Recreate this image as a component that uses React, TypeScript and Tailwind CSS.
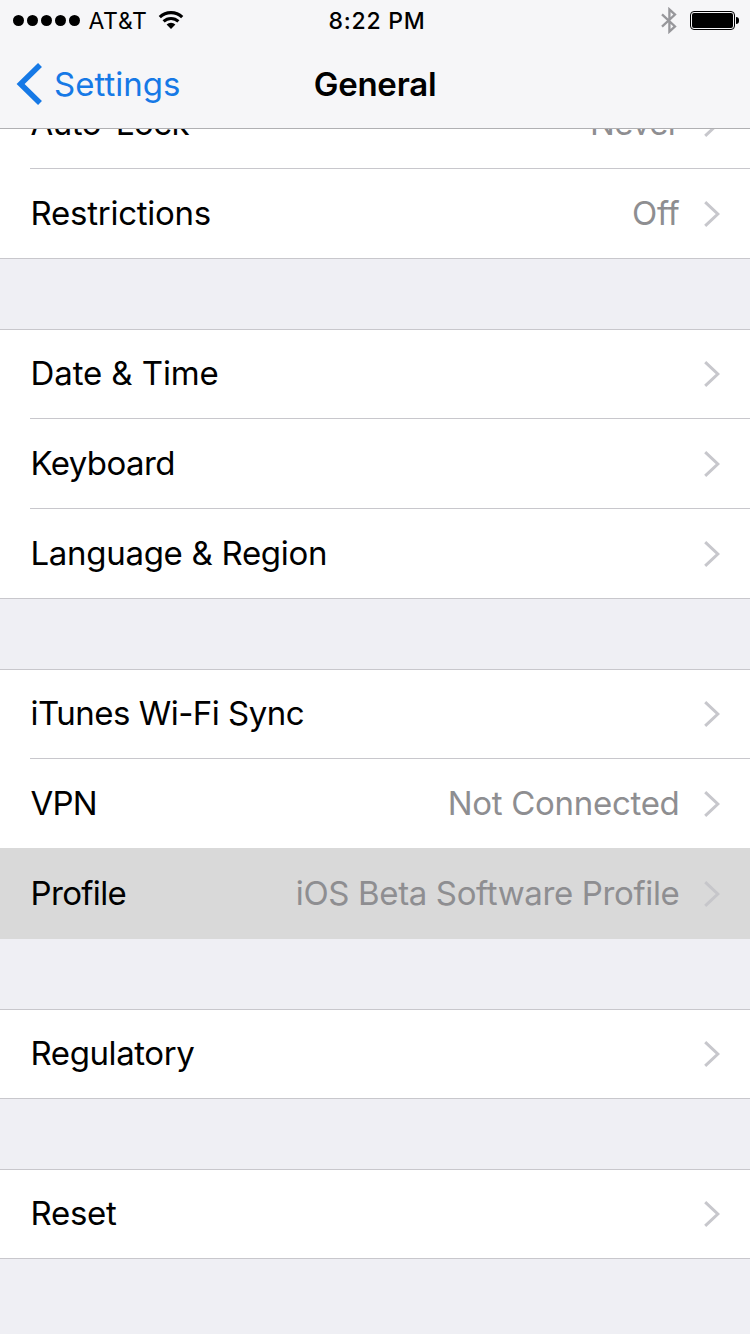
import clsx from 'clsx'

interface Item {
  label: string
  value?: string
  active?: boolean
  labelClass?: string
  valueClass?: string
}

const groups: Item[][] = [
  [
    { label: 'Auto-Lock', labelClass: 'tracking-[-0.5px]', value: 'Never', valueClass: 'tracking-[-0.7px]' },
    { label: 'Restrictions', labelClass: 'tracking-[-0.25px]', value: 'Off', valueClass: 'tracking-[-0.3px]' },
  ],
  [
    { label: 'Date & Time', labelClass: 'tracking-[-0.1px]' },
    { label: 'Keyboard', labelClass: 'tracking-[-0.6px]' },
    { label: 'Language & Region', labelClass: 'tracking-[-0.3px]' },
  ],
  [
    { label: 'iTunes Wi-Fi Sync', labelClass: 'tracking-[-0.52px]' },
    { label: 'VPN', value: 'Not Connected', labelClass: 'tracking-[-0.8px]', valueClass: 'tracking-[-0.3px]' },
    {
      label: 'Profile',
      value: 'iOS Beta Software Profile',
      active: true,
      labelClass: 'tracking-[-0.65px]',
      valueClass: 'tracking-[-0.36px]',
    },
  ],
  [{ label: 'Regulatory', labelClass: 'tracking-[-0.42px]' }],
  [{ label: 'Reset', labelClass: 'tracking-[-0.3px]' }],
]

function Row({ item, first, last }: { item: Item; first: boolean; last: boolean }) {
  return (
    <div
      className={clsx(
        'relative',
        item.active ? 'z-10 -mt-px bg-[#d9d9d9] pt-px' : 'bg-white',
        first && 'shadow-[inset_0_1px_0_#c8c7cc]',
        last ? 'pl-0' : 'pl-[30px]'
      )}
    >
      <div
        className={clsx(
          'flex h-[90px] items-center border-b pr-[29px]',
          item.active ? 'border-[#d9d9d9]' : 'border-[#c8c7cc]',
          last && 'pl-[30px]'
        )}
      >
        <span className={clsx('flex-1 whitespace-nowrap pl-[0.5px] text-black', item.labelClass)}>
          {item.label}
        </span>
        {item.value && (
          <span className={clsx('mr-[23.5px] whitespace-nowrap text-[#8e8e91]', item.valueClass)}>
            {item.value}
          </span>
        )}
        <svg
          className={clsx('h-7 w-[18px]', item.active ? 'text-[#c6c6ca]' : 'text-[#c7c7cc]')}
          viewBox="0 0 18 28"
          fill="none"
          stroke="currentColor"
          strokeWidth="3"
        >
          <path d="M2.2 2.2 14.8 14 2.2 25.8" />
        </svg>
      </div>
    </div>
  )
}

function StatusBar() {
  return (
    <div className="grid h-10 grid-cols-3 items-center">
      <div className="flex items-center pl-[13px]">
        <div className="flex gap-[3px]">
          {[0, 1, 2, 3, 4].map((i) => (
            <span key={i} className="size-[11px] rounded-full bg-black" />
          ))}
        </div>
        <span className="ml-[8.5px] pt-[2px] text-[23px] leading-none tracking-[0.7px]">AT&amp;T</span>
        <svg className="ml-[10px] h-[18px] w-[26px]" viewBox="0 0 26 18" fill="none" stroke="#000">
          <path d="M1.8 6.1a16.2 16.2 0 0 1 22.4 0" strokeWidth="3.2" />
          <path d="M5.6 10.4a10.6 10.6 0 0 1 14.8 0" strokeWidth="3" />
          <path d="M13 18 8.6 13.6a6.2 6.2 0 0 1 8.8 0Z" fill="#000" stroke="none" />
        </svg>
      </div>
      <div className="pt-[2px] pl-1 text-center text-[23px] leading-none font-medium tracking-[0.75px]">
        8:22 PM
      </div>
      <div className="flex items-center justify-end pr-[11px]">
        <svg className="h-[27px] w-4" viewBox="0 0 16 27" fill="none" stroke="#97979b" strokeWidth="2.3">
          <path d="M1 7.3 14 19.4 8.4 24.6V2.4L14 7.6 1 19.7" />
        </svg>
        <div className="ml-[13px] flex h-[19px] w-[45px] rounded-[4px] border border-black p-px">
          <div className="flex-1 rounded-[2px] bg-black" />
        </div>
        <div className="ml-px h-[7px] w-[3px] rounded-r-full bg-black" />
      </div>
    </div>
  )
}

export default function App() {
  return (
    <div className="flex h-[1334px] w-[750px] flex-col overflow-hidden bg-[#efeff4] font-['Inter',sans-serif] text-[33px]">
      <header className="relative z-20 h-[129px] shrink-0 border-b border-[#b0b0b3] bg-[#f6f6f8]">
        <StatusBar />
        <nav className="grid h-[88px] grid-cols-3 items-center">
          <div className="flex items-center pl-4 text-[#1679e6]">
            <svg className="h-[42px] w-[27px]" viewBox="0 0 27 42" fill="none" stroke="currentColor" strokeWidth="5.6">
              <path d="M24 2 4.6 21 24 40" />
            </svg>
            <span className="ml-[11px] pt-[2px]">Settings</span>
          </div>
          <h1 className="pt-[2px] text-center font-semibold tracking-[-0.25px]">General</h1>
        </nav>
      </header>

      {/* list is scrolled, so the first row sits half under the header */}
      <main className="-mt-[50px] flex flex-col gap-[70px]">
        {groups.map((items, g) => (
          <section key={g}>
            {items.map((item, i) => (
              <Row key={item.label} item={item} first={i === 0} last={i === items.length - 1} />
            ))}
          </section>
        ))}
      </main>
    </div>
  )
}
